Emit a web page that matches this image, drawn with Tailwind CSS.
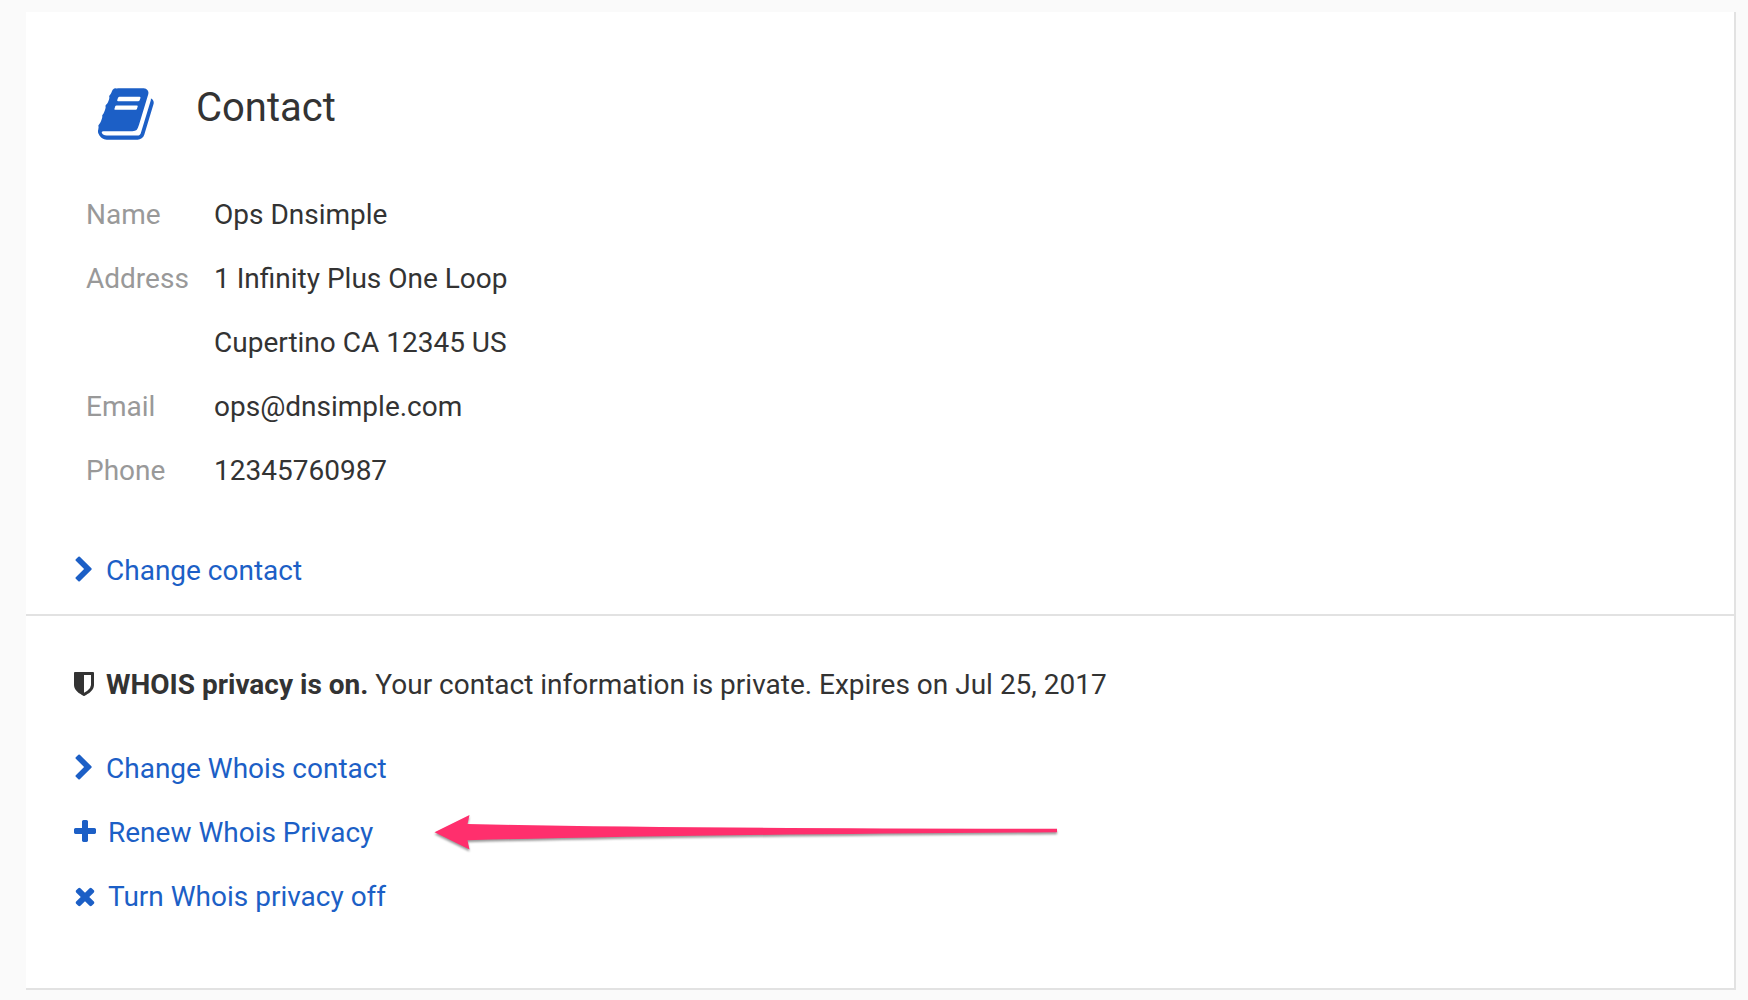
<!DOCTYPE html>
<html lang="en">
<head>
<meta charset="utf-8">
<meta name="viewport" content="width=device-width, initial-scale=1">
<title>Contact</title>
<script src="https://cdn.jsdelivr.net/npm/@tailwindcss/browser@4"></script>
</head>
<body class="bg-[#fafafa] font-['Roboto',sans-serif] text-[28px] leading-[64px] text-[#333]">
<main class="mt-3 mr-3 mb-2.5 ml-[26px] border-r-2 border-b-2 border-[#e2e2e2] bg-white">
  <section class="border-b-2 border-[#e2e2e2] px-12 pt-16 pb-[11px]">
    <header class="flex items-start pl-6">
      <svg class="mt-2 h-[60px] w-[60px] shrink-0 fill-[#1c5fc6]" viewBox="0 0 1792 1792" aria-hidden="true"><path d="M1639 478q40 57 18 129l-275 906q-19 64-76.5 107.5t-122.5 43.5h-923q-77 0-148.5-53.5t-99.5-131.500q-24-67-2-127 0-4 3-27t4-37q1-8-3-21.500t-3-19.500q2-11 8-21t16.500-23.500 16.500-23.500q23-38 45-91.500t30-91.500q3-10 .5-30t-.5-28q3-11 17-28t17-23q21-36 42-92t25-90q1-9-2.500-32t.5-28q4-13 22-30.500t22-22.500q19-26 42.500-84.500t27.500-96.500q1-8-3-25.500t-2-26.500q2-8 9-18t18-23 17-21q8-12 16.500-30.500t15-35 16-36 19.500-32 26.500-23.500 36-11.500 47.500 5.500l-1 3q38-9 51-9h761q74 0 114 56t18 130l-274 906q-36 119-71.500 153.500t-128.500 34.500h-869q-27 0-38 15-11 16-1 43 24 70 144 70h923q29 0 56-15.500t35-41.500l300-987q7-22 5-57 38 15 59 43zm-1064 2q-4 13 2 22.500t20 9.500h608q13 0 25.500-9.500t16.500-22.500l21-64q4-13-2-22.500t-20-9.500h-608q-13 0-25.500 9.500t-16.500 22.500zm-83 256q-4 13 2 22.500t20 9.500h608q13 0 25.500-9.500t16.500-22.500l21-64q4-13-2-22.500t-20-9.500h-608q-13 0-25.500 9.500t-16.500 22.500z"/></svg>
      <h1 class="ml-[38px] text-[40px]">Contact</h1>
    </header>
    <dl class="mt-[39px] grid grid-cols-[128px_1fr] pl-3">
      <dt class="text-[#999]">Name</dt><dd>Ops Dnsimple</dd>
      <dt class="text-[#999]">Address</dt><dd>1 Infinity Plus One Loop<br>Cupertino CA 12345 US</dd>
      <dt class="text-[#999]">Email</dt><dd>ops@dnsimple.com</dd>
      <dt class="text-[#999]">Phone</dt><dd>12345760987</dd>
    </dl>
    <div class="mt-9 flex">
      <a href="#change-contact" class="flex items-center gap-1 text-[#1c5fc6]">
        <svg class="mb-0.5 h-7 w-7 fill-current" viewBox="250 0 1792 1792" aria-hidden="true"><path d="M1363 877l-742 742q-19 19-45 19t-45-19l-166-166q-19-19-19-45t19-45l531-531-531-531q-19-19-19-45t19-45l166-166q19-19 45-19t45 19l742 742q19 19 19 45t-19 45z"/></svg>
        Change contact</a>
    </div>
  </section>
  <section class="px-12 pt-[37px] pb-[59px]">
    <p class="flex items-center gap-1">
      <svg class="mb-0.5 h-7 w-7 shrink-0 fill-current" viewBox="256 0 1792 1792" aria-hidden="true"><path d="M1344 960v-640h-448v1137q119-63 213-137 235-184 235-360zm192-768v768q0 86-33.500 170.500t-83 150-118 127.500-126.500 103-121 77.500-89.500 49.500-42.500 20q-12 6-26 6t-26-6q-16-7-42.500-20t-89.500-49.500-121-77.500-126.500-103-118-127.500-83-150-33.500-170.500v-768q0-26 19-45t45-19h1152q26 0 45 19t19 45z"/></svg>
      <span><strong class="font-bold">WHOIS privacy is on.</strong> Your contact information is private. Expires on Jul 25, 2017</span>
    </p>
    <ul class="mt-5">
      <li class="flex">
        <a href="#change-whois" class="flex items-center gap-1 text-[#1c5fc6]">
          <svg class="mb-0.5 h-7 w-7 fill-current" viewBox="250 0 1792 1792" aria-hidden="true"><path d="M1363 877l-742 742q-19 19-45 19t-45-19l-166-166q-19-19-19-45t19-45l531-531-531-531q-19-19-19-45t19-45l166-166q19-19 45-19t45 19l742 742q19 19 19 45t-19 45z"/></svg>
          Change Whois contact</a>
      </li>
      <li class="relative flex">
        <a href="#renew-whois" class="flex items-center gap-1.5 text-[#1c5fc6]">
          <svg class="mb-0.5 h-7 w-7 fill-current" viewBox="192 0 1792 1792" aria-hidden="true"><path d="M1600 736v192q0 40-28 68t-68 28h-416v416q0 40-28 68t-68 28h-192q-40 0-68-28t-28-68v-416h-416q-40 0-68-28t-28-68v-192q0-40 28-68t68-28h416v-416q0-40 28-68t68-28h192q40 0 68 28t28 68v416h416q40 0 68 28t28 68z"/></svg>
          Renew Whois Privacy</a>
        <!-- Callout arrow pointing at the renew link -->
        <svg class="pointer-events-none absolute top-[7px] left-[356px] h-12 w-[632px] drop-shadow-[0_2px_1px_rgba(0,0,0,0.4)]" viewBox="0 0 632 48" aria-hidden="true"><path fill="#ff2f6d" d="M4.500 24.300 39.500 7 37.500 16 Q250 20.500 627 20.700V24.200Q250 26.500 37.500 32.300L39.500 41.500Z"/></svg>
      </li>
      <li class="flex">
        <a href="#whois-off" class="flex items-center gap-1.5 text-[#1c5fc6]">
          <svg class="mb-0.5 h-7 w-7 fill-current" viewBox="192 0 1792 1792" aria-hidden="true"><path d="M1490 1322q0 40-28 68l-136 136q-28 28-68 28t-68-28l-294-294-294 294q-28 28-68 28t-68-28l-136-136q-28-28-28-68t28-68l294-294-294-294q-28-28-28-68t28-68l136-136q28-28 68-28t68 28l294 294 294-294q28-28 68-28t68 28l136 136q28 28 28 68t-28 68l-294 294 294 294q28 28 28 68z"/></svg>
          Turn Whois privacy off</a>
      </li>
    </ul>
  </section>
</main>
</body>
</html>
